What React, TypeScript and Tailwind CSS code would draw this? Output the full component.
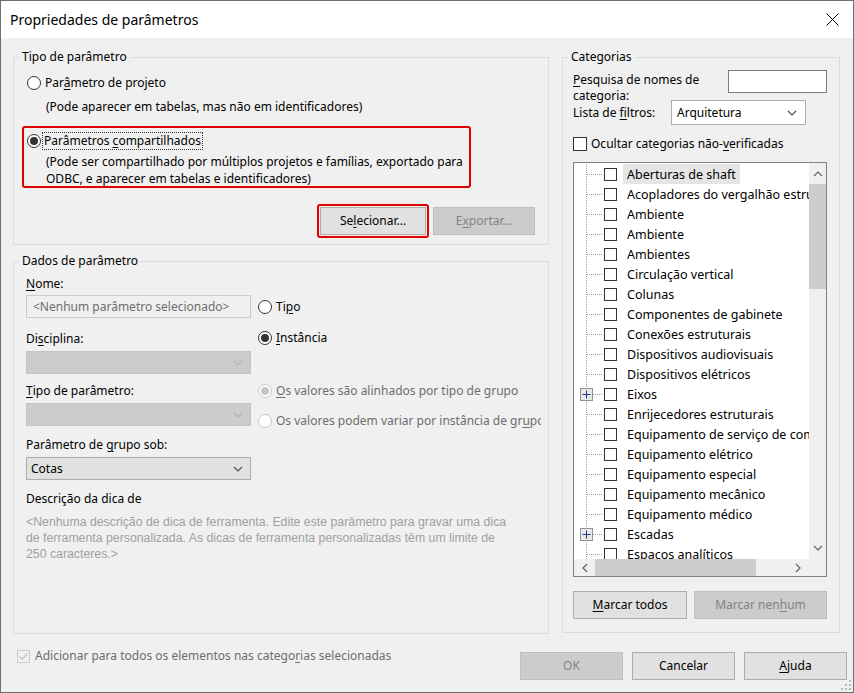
import React from "react";

const U = ({ children }: { children: React.ReactNode }) => (
  <span className="underline decoration-1 underline-offset-[2px]">{children}</span>
);

function Radio({ checked = false, disabled = false }: { checked?: boolean; disabled?: boolean }) {
  return (
    <span
      className={
        "w-[14px] h-[14px] rounded-full border flex items-center justify-center shrink-0 " +
        (disabled ? "border-[#c6c6c6] bg-[#ffffff]" : "border-[#333333] bg-white")
      }
    >
      {checked && (
        <span className={"w-[8px] h-[8px] rounded-full " + (disabled ? "bg-[#c6c6c6]" : "bg-[#333333]")} />
      )}
    </span>
  );
}

function Checkbox({ checked = false, disabled = false, size = 13 }: { checked?: boolean; disabled?: boolean; size?: number }) {
  return (
    <span
      className={
        "flex items-center justify-center shrink-0 border " +
        (size === 14 ? "w-[14px] h-[14px] " : "w-[13px] h-[13px] ") +
        (disabled ? "border-[#cccccc] bg-[#f0f0f0]" : "border-[#333333] bg-white")
      }
    >
      {checked && (
        <svg width="11" height="11" viewBox="0 0 11 11">
          <path d="M1.5 5.5 L4.2 8.2 L9.5 2.5" fill="none" stroke={disabled ? "#c0c0c0" : "#333"} strokeWidth="1.2" />
        </svg>
      )}
    </span>
  );
}

function Chevron({ color = "#606060", dir = "down" }: { color?: string; dir?: "down" | "up" | "left" | "right" }) {
  const paths: Record<string, string> = {
    down: "M1 1 L5 5 L9 1",
    up: "M1 5 L5 1 L9 5",
    left: "M5 1 L1 5 L5 9",
    right: "M1 1 L5 5 L1 9",
  };
  const w = dir === "down" || dir === "up" ? 10 : 6;
  const h = dir === "down" || dir === "up" ? 6 : 10;
  return (
    <svg width={w} height={h} viewBox={`0 0 ${w} ${h}`}>
      <path d={paths[dir]} fill="none" stroke={color} strokeWidth="1.2" />
    </svg>
  );
}

function Button({ children, disabled = false, w }: { children: React.ReactNode; disabled?: boolean; w: string }) {
  return (
    <div
      className={
        "h-[28px] border flex items-center justify-center text-[12px] leading-[16px] " +
        w +
        (disabled ? " bg-[#cccccc] border-[#bfbfbf] text-[#838383]" : " bg-[#e1e1e1] border-[#adadad] text-black")
      }
    >
      {children}
    </div>
  );
}

const items: { t: string; plus?: boolean; sel?: boolean }[] = [
  { t: "Aberturas de shaft", sel: true },
  { t: "Acopladores do vergalhão estrutural" },
  { t: "Ambiente" },
  { t: "Ambiente" },
  { t: "Ambientes" },
  { t: "Circulação vertical" },
  { t: "Colunas" },
  { t: "Componentes de gabinete" },
  { t: "Conexões estruturais" },
  { t: "Dispositivos audiovisuais" },
  { t: "Dispositivos elétricos" },
  { t: "Eixos", plus: true },
  { t: "Enrijecedores estruturais" },
  { t: "Equipamento de serviço de comida" },
  { t: "Equipamento elétrico" },
  { t: "Equipamento especial" },
  { t: "Equipamento mecânico" },
  { t: "Equipamento médico" },
  { t: "Escadas", plus: true },
  { t: "Espaços analíticos" },
];

function TreeLines({ plus }: { plus?: boolean }) {
  return (
    <svg width="30" height="20" viewBox="0 0 30 20" className="shrink-0">
      <line x1="12.5" y1="0" x2="12.5" y2="20" stroke="#a0a0a0" strokeDasharray="1 1" />
      <line x1="13" y1="10.5" x2="28" y2="10.5" stroke="#a0a0a0" strokeDasharray="1 1" />
      {plus && (
        <g>
          <rect x="6.5" y="4.5" width="12" height="12" fill="#e8e8e8" stroke="#919191" />
          <line x1="8.5" y1="10.5" x2="16.5" y2="10.5" stroke="#1e3a8a" />
          <line x1="12.5" y1="6.5" x2="12.5" y2="14.5" stroke="#1e3a8a" />
        </g>
      )}
    </svg>
  );
}

export default function App() {
  return (
    <div className="relative w-[854px] h-[693px] bg-[#f0f0f0] border border-[#6f6f6f] flex flex-col font-['Noto_Sans',sans-serif] text-[12px] leading-[16px] text-black overflow-hidden">
      {/* Title bar */}
      <div className="h-[37px] bg-white flex items-center justify-between pl-[9px] pr-[14px] shrink-0">
        <span className="text-[14px] leading-[20px]">Propriedades de parâmetros</span>
        <svg width="13" height="13" viewBox="0 0 13 13">
          <path d="M0.5 0.5 L12.5 12.5 M12.5 0.5 L0.5 12.5" stroke="#000" strokeWidth="1" />
        </svg>
      </div>

      {/* Body */}
      <div className="flex gap-[13px] pl-[12px] pr-[12px] pt-[11px]">
        {/* Left column */}
        <div className="w-[536px] flex flex-col gap-[8px]">
          <fieldset className="border border-[#dcdcdc] h-[196px] m-0 p-0 min-w-0">
            <legend className="ml-[5px] px-[3px] leading-[16px]">Tipo de parâmetro</legend>
            <div className="pl-[13px] pr-[13px] pt-[10px] flex flex-col">
              <div className="flex items-center h-[16px] gap-[4px]">
                <Radio />
                <span>
                  Par<U>â</U>metro de projeto
                </span>
              </div>
              <div className="mt-[8px] pl-[19px] h-[16px] whitespace-nowrap">
                (Pode aparecer em tabelas, mas não em identificadores)
              </div>
              <div className="mt-[11px] -ml-[5px] w-[449px] h-[62px] border-2 border-[#e00000] rounded-[3px] pl-[3px] pt-[5px] overflow-hidden">
                <div className="flex items-center h-[16px] gap-[2px]">
                  <Radio checked />
                  <span className="outline-1 outline-dotted outline-[#333] px-[1px]">
                    Parâmetros <U>c</U>ompartilhados
                  </span>
                </div>
                <div className="mt-[4px] pl-[19px] leading-[17px] whitespace-nowrap">
                  (Pode ser compartilhado por múltiplos projetos e famílias, exportado para
                  <br />
                  ODBC, e aparecer em tabelas e identificadores)
                </div>
              </div>
              <div className="mt-[16px] flex justify-end items-center gap-[4px]">
                <div className="border-2 border-[#e00000] rounded-[3px] p-[1px]">
                  <Button w="w-[106px]">
                    <span>
                      Se<U>l</U>ecionar...
                    </span>
                  </Button>
                </div>
                <Button w="w-[102px]" disabled>
                  <span>
                    E<U>x</U>portar...
                  </span>
                </Button>
              </div>
            </div>
          </fieldset>

          <fieldset className="border border-[#dcdcdc] h-[381px] m-0 p-0 min-w-0">
            <legend className="ml-[5px] px-[3px] leading-[16px]">Dados de parâmetro</legend>
            <div className="pl-[12px] flex flex-col">
              <div className="flex">
                <div className="w-[225px] flex flex-col">
                  <div className="mt-[7px] h-[16px]">
                    <U>N</U>ome:
                  </div>
                  <div className="mt-[3px] h-[23px] border border-[#cccccc] bg-[#f0f0f0] flex items-center pl-[6px] text-[#6d6d6d]">
                    &lt;Nenhum parâmetro selecionado&gt;
                  </div>
                  <div className="mt-[13px] h-[16px]">
                    Di<U>s</U>ciplina:
                  </div>
                  <div className="mt-[4px] h-[23px] border border-[#c4c4c4] bg-[#cccccc] flex items-center justify-end pr-[7px]">
                    <Chevron color="#b4b4b4" />
                  </div>
                  <div className="mt-[9px] h-[16px]">
                    <U>T</U>ipo de parâmetro:
                  </div>
                  <div className="mt-[4px] h-[23px] border border-[#c4c4c4] bg-[#cccccc] flex items-center justify-end pr-[7px]">
                    <Chevron color="#b4b4b4" />
                  </div>
                  <div className="mt-[11px] h-[16px]">
                    Parâmetro de <U>g</U>rupo sob:
                  </div>
                  <div className="mt-[4px] h-[23px] border border-[#adadad] bg-[#e1e1e1] flex items-center justify-between pl-[4px] pr-[7px]">
                    <span>Cotas</span>
                    <Chevron color="#505050" />
                  </div>
                </div>
                <div className="ml-[7px] w-[283px] overflow-hidden flex flex-col">
                  <div className="mt-[30px] h-[16px] flex items-center gap-[4px]">
                    <Radio />
                    <span>
                      Ti<U>p</U>o
                    </span>
                  </div>
                  <div className="mt-[15px] h-[16px] flex items-center gap-[4px]">
                    <Radio checked />
                    <span>
                      <U>I</U>nstância
                    </span>
                  </div>
                  <div className="mt-[37px] h-[16px] flex items-center gap-[4px] text-[#6d6d6d] whitespace-nowrap">
                    <Radio checked disabled />
                    <span>
                      <U>O</U>s valores são alinhados por tipo de grupo
                    </span>
                  </div>
                  <div className="mt-[14px] h-[16px] flex items-center gap-[4px] text-[#6d6d6d] whitespace-nowrap">
                    <Radio disabled />
                    <span>
                      Os valores podem variar por instância de gr<U>u</U>po
                    </span>
                  </div>
                </div>
              </div>
              <div className="mt-[11px] h-[16px]">Descrição da dica de</div>
              <div className="mt-[7px] leading-[16px] whitespace-nowrap text-[#a0a0a0] font-['Liberation_Sans',sans-serif] text-[12.3px]">
                &lt;Nenhuma descrição de dica de ferramenta. Edite este parâmetro para gravar uma dica
                <br />
                de ferramenta personalizada. As dicas de ferramenta personalizadas têm um limite de
                <br />
                250 caracteres.&gt;
              </div>
            </div>
          </fieldset>
        </div>

        {/* Right column */}
        <fieldset className="w-[278px] border border-[#dcdcdc] h-[584px] m-0 p-0 min-w-0">
          <legend className="ml-[5px] px-[3px] leading-[16px]">Categorias</legend>
          <div className="pl-[10px] pr-[12px] flex flex-col">
            <div className="flex items-start">
              <div className="mt-[7px] w-[156px] leading-[16px]">
                <U>P</U>esquisa de nomes de
                <br />
                categoria:
              </div>
              <div className="mt-[5px] w-[100px] h-[23px] bg-white border border-[#7a7a7a]" />
            </div>
            <div className="-mt-[4px] flex items-center">
              <div className="w-[98px]">
                Lista de <U>f</U>iltros:
              </div>
              <div className="w-[135px] h-[25px] bg-white border border-[#adadad] flex items-center justify-between pl-[5px] pr-[8px]">
                <span>Arquitetura</span>
                <Chevron color="#505050" />
              </div>
            </div>
            <div className="mt-[11px] flex items-center gap-[4px] h-[16px]">
              <Checkbox size={14} />
              <span>
                Ocultar categorias não-<U>v</U>erificadas
              </span>
            </div>
            <div className="mt-[10px] w-[254px] h-[415px] border border-[#828282] bg-white grid grid-cols-[1fr_17px] grid-rows-[1fr_17px]">
              <div className="overflow-hidden pt-[1px] text-[12.5px] leading-[17px]">
                {items.map((it, i) => (
                  <div key={i} className="h-[20px] flex items-center whitespace-nowrap">
                    <TreeLines plus={it.plus} />
                    <Checkbox />
                    <span className={"ml-[6px] px-[4px] h-[20px] flex items-center " + (it.sel ? "bg-[#e5e5e5]" : "")}>
                      {it.t}
                    </span>
                  </div>
                ))}
              </div>
              <div className="bg-[#f0f0f0] flex flex-col items-center">
                <div className="h-[21px] flex items-center">
                  <Chevron dir="up" color="#606060" />
                </div>
                <div className="w-[17px] h-[105px] bg-[#cdcdcd]" />
                <div className="flex-1" />
                <div className="h-[22px] flex items-center">
                  <Chevron dir="down" color="#606060" />
                </div>
              </div>
              <div className="bg-[#f0f0f0] flex items-center">
                <div className="w-[21px] flex justify-center">
                  <Chevron dir="left" color="#606060" />
                </div>
                <div className="h-[17px] w-[161px] bg-[#cdcdcd]" />
                <div className="flex-1" />
                <div className="w-[22px] flex justify-center">
                  <Chevron dir="right" color="#606060" />
                </div>
              </div>
              <div className="bg-[#f0f0f0]" />
            </div>
            <div className="mt-[14px] flex gap-[7px]">
              <Button w="w-[114px]">
                <span>
                  <U>M</U>arcar todos
                </span>
              </Button>
              <Button w="w-[133px]" disabled>
                <span>
                  Marcar nen<U>h</U>um
                </span>
              </Button>
            </div>
          </div>
        </fieldset>
      </div>

      {/* Bottom row */}
      <div className="flex items-start justify-between pl-[16px] pr-[6px]">
        <div className="mt-[14px] flex items-center gap-[5px] h-[16px] text-[#6d6d6d]">
          <Checkbox checked disabled />
          <span>
            Adicionar para todos os elementos nas catego<U>r</U>ias selecionadas
          </span>
        </div>
        <div className="mt-[18px] flex gap-[9px]">
          <Button w="w-[103px]" disabled>
            OK
          </Button>
          <Button w="w-[103px]">Cancelar</Button>
          <Button w="w-[103px]">
            <span>
              <U>A</U>juda
            </span>
          </Button>
        </div>
      </div>

      {/* resize grip */}
      <svg className="absolute right-[2px] bottom-[2px]" width="10" height="10" viewBox="0 0 10 10">
        <rect x="8" y="0" width="2" height="2" fill="#b8b8b8" />
        <rect x="4" y="4" width="2" height="2" fill="#b8b8b8" />
        <rect x="8" y="4" width="2" height="2" fill="#b8b8b8" />
        <rect x="0" y="8" width="2" height="2" fill="#b8b8b8" />
        <rect x="4" y="8" width="2" height="2" fill="#b8b8b8" />
        <rect x="8" y="8" width="2" height="2" fill="#b8b8b8" />
      </svg>
    </div>
  );
}
